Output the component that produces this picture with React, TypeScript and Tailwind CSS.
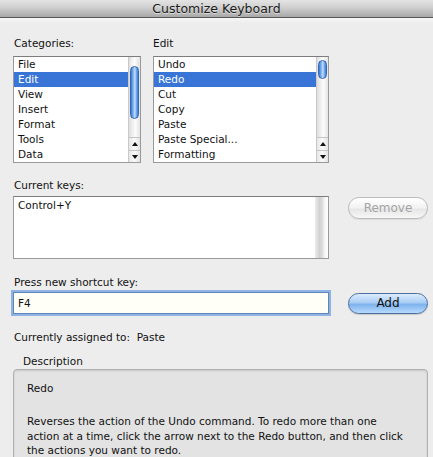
import React from "react";

function ScrollBar({ thumbTop, thumbHeight }: { thumbTop: number; thumbHeight: number }) {
  return (
    <div className="relative w-[12px] h-full border-l border-[#c9c9c9] bg-[linear-gradient(to_right,#dedede,#f6f6f6_45%,#fbfbfb_60%,#e4e4e4)] flex flex-col">
      <div className="flex-1 relative">
        <div className="absolute left-[1px] right-[1px] top-[1px] h-[12px] rounded-t-full bg-[linear-gradient(to_right,#e9e9e9,#ffffff,#e2e2e2)]" />
        <div
          className="absolute left-[1px] right-[1px] rounded-full border border-[#3566b3] bg-[linear-gradient(to_right,#3a78d4,#86b8f0_35%,#c2e0fd_55%,#6aa3ea_80%,#3d7ed9)]"
          style={{ top: thumbTop, height: thumbHeight }}
        />
      </div>
      <div className="h-[13px] border-t border-[#c4c4c4] flex items-center justify-center bg-[linear-gradient(to_right,#e6e6e6,#fafafa,#e2e2e2)]">
        <div className="w-0 h-0 border-l-[3px] border-r-[3px] border-b-[4px] border-l-transparent border-r-transparent border-b-[#111]" />
      </div>
      <div className="h-[12px] border-t border-[#c4c4c4] flex items-center justify-center bg-[linear-gradient(to_right,#e6e6e6,#fafafa,#e2e2e2)]">
        <div className="w-0 h-0 border-l-[3px] border-r-[3px] border-t-[4px] border-l-transparent border-r-transparent border-t-[#111]" />
      </div>
    </div>
  );
}

function ListBox({
  items,
  selected,
  width,
  thumbTop,
  thumbHeight,
}: {
  items: string[];
  selected: number;
  width: string;
  thumbTop: number;
  thumbHeight: number;
}) {
  return (
    <div className={`${width} h-[107px] border border-[#9a9a9a] border-t-[#7d7d7d] bg-white flex`}>
      <div className="flex-1 flex flex-col overflow-hidden">
        {items.map((it, i) => (
          <div
            key={it}
            className={`h-[15px] leading-[15px] pl-[4px] whitespace-nowrap ${
              i === selected ? "bg-[#3875d7] text-white" : "text-[#111]"
            }`}
          >
            {it}
          </div>
        ))}
      </div>
      <ScrollBar thumbTop={thumbTop} thumbHeight={thumbHeight} />
    </div>
  );
}

export default function App() {
  return (
    <div className="w-[433px] h-[457px] overflow-hidden bg-[#ededed] font-['DejaVu_Sans','Liberation_Sans',sans-serif] text-[10.5px] text-[#111] flex flex-col">
      {/* Title bar */}
      <div className="h-[18px] shrink-0 border-b border-[#555] bg-[linear-gradient(to_bottom,#e4e4e4,#cfcfcf_45%,#a8a8a8)] flex items-center justify-center">
        <span className="text-[12.5px] leading-[16px] text-[#1a1a1a] [text-shadow:0_1px_0_rgba(255,255,255,0.5)]">
          Customize Keyboard
        </span>
      </div>
      <div className="h-[5px] shrink-0 bg-[linear-gradient(to_bottom,#f7f7f7,#ededed)]" />

      <div className="pl-[13px] flex flex-col">
        {/* Lists */}
        <div className="mt-[14px] flex gap-[12px]">
          <div className="flex flex-col">
            <div className="h-[13px] leading-[13px] pl-[1px] mb-[6px]">Categories:</div>
            <ListBox
              width="w-[128px]"
              items={["File", "Edit", "View", "Insert", "Format", "Tools", "Data"]}
              selected={1}
              thumbTop={9}
              thumbHeight={53}
            />
          </div>
          <div className="flex flex-col">
            <div className="h-[13px] leading-[13px] mb-[6px]">Edit</div>
            <ListBox
              width="w-[176px]"
              items={["Undo", "Redo", "Cut", "Copy", "Paste", "Paste Special...", "Formatting"]}
              selected={1}
              thumbTop={3}
              thumbHeight={19}
            />
          </div>
        </div>

        {/* Current keys */}
        <div className="mt-[16px] h-[13px] leading-[13px] pl-[1px]">Current keys:</div>
        <div className="mt-[4px] flex items-start gap-[19px]">
          <div className="w-[316px] h-[63px] border border-[#9a9a9a] border-t-[#7d7d7d] bg-white flex">
            <div className="flex-1 pl-[4px] pt-[1px] leading-[15px]">Control+Y</div>
            <div className="w-[13px] h-full bg-[linear-gradient(to_right,#ececec,#d2d2d2_35%,#dcdcdc_55%,#f6f6f6_75%,#ffffff)]" />
          </div>
          <button className="mt-[1px] w-[80px] h-[22px] rounded-full border border-[#bdbdbd] bg-[linear-gradient(to_bottom,#ffffff,#f2f2f2_50%,#e6e6e6_55%,#f7f7f7)] text-[12px] leading-[20px] text-[#a4a4a4] shadow-[0_1px_1px_rgba(0,0,0,0.08)]">
            Remove
          </button>
        </div>

        {/* Press new shortcut key */}
        <div className="mt-[17px] h-[13px] leading-[13px] pl-[1px]">Press new shortcut key:</div>
        <div className="mt-[3px] flex items-center gap-[19px]">
          <div className="w-[316px] h-[22px] border border-[#5f86bb] bg-[#fffff8] ring-[2px] ring-[#8fb4e3] flex items-center pl-[4px] leading-[15px]">
            F4
          </div>
          <button className="mt-[1px] w-[80px] h-[21px] rounded-full border border-[#4e6f9e] bg-[linear-gradient(to_bottom,#dcebfc,#a9cdf5_45%,#7fb3ee_55%,#b7dafd)] text-[12px] leading-[19px] text-[#111] shadow-[0_1px_1px_rgba(0,0,0,0.15)]">
            Add
          </button>
        </div>

        {/* Currently assigned */}
        <div className="mt-[17px] h-[13px] leading-[13px] pl-[1px] whitespace-pre">Currently assigned to:  Paste</div>

        {/* Description */}
        <div className="mt-[11px] h-[13px] leading-[13px] pl-[10px]">Description</div>
        <div className="mt-[1px] w-[415px] h-[100px] rounded-t-[4px] border border-[#b0b0b0] bg-[#e3e3e3] shadow-[inset_0_1px_2px_rgba(0,0,0,0.12)] pl-[13px] pt-[12px]">
          <div className="h-[13px] leading-[13px]">Redo</div>
          <div className="mt-[19px] leading-[14.5px] whitespace-nowrap">
            Reverses the action of the Undo command. To redo more than one
            <br />
            action at a time, click the arrow next to the Redo button, and then click
            <br />
            the actions you want to redo.
          </div>
        </div>
      </div>
    </div>
  );
}
